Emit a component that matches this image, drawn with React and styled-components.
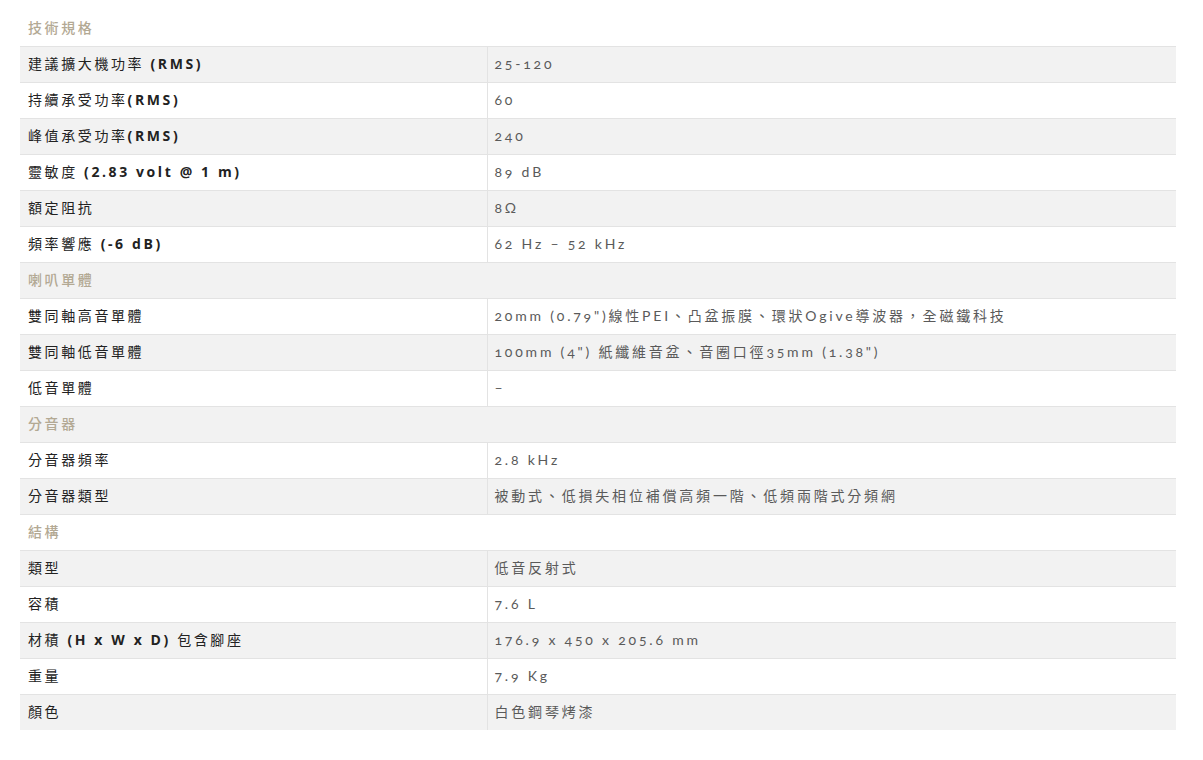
import React from 'react';
import styled, { createGlobalStyle } from 'styled-components';

const GlobalStyle = createGlobalStyle`
  body {
    margin: 0;
    background: #fff;
    font-family: "Open Sans", "Noto Sans CJK TC", sans-serif;
  }
`;

const specs = [
  { section: '技術規格' },
  ['建議擴大機功率 (RMS)', '25-120'],
  ['持續承受功率(RMS)', '60'],
  ['峰值承受功率(RMS)', '240'],
  ['靈敏度 (2.83 volt @ 1 m)', '89 dB'],
  ['額定阻抗', '8Ω'],
  ['頻率響應 (-6 dB)', '62 Hz – 52 kHz'],
  { section: '喇叭單體' },
  ['雙同軸高音單體', '20mm (0.79")線性PEI、凸盆振膜、環狀Ogive導波器，全磁鐵科技'],
  ['雙同軸低音單體', '100mm (4") 紙纖維音盆、音圈口徑35mm (1.38")'],
  ['低音單體', '–'],
  { section: '分音器' },
  ['分音器頻率', '2.8 kHz'],
  ['分音器類型', '被動式、低損失相位補償高頻一階、低頻兩階式分頻網'],
  { section: '結構' },
  ['類型', '低音反射式'],
  ['容積', '7.6 L'],
  ['材積 (H x W x D) 包含腳座', '176.9 x 450 x 205.6 mm'],
  ['重量', '7.9 Kg'],
  ['顏色', '白色鋼琴烤漆'],
];

const Page = styled.div`
  padding: 10px 27px 30px 20px;
`;

const Table = styled.table`
  width: 100%;
  border-collapse: collapse;
  table-layout: fixed;
`;

const LabelCol = styled.col`
  width: 467px;
`;

const Row = styled.tr`
  height: 36px;
  background: ${(p) => (p.$striped ? '#f2f2f2' : '#fff')};
  border-top: ${(p) => (p.$first ? 'none' : '1px solid #e3e3e3')};
`;

const SectionCell = styled.td`
  padding: 0 8px 2px;
  font-size: 14px;
  font-weight: 500;
  letter-spacing: 2.6px;
  color: #b3a994;
`;

const Label = styled.td`
  padding: 0 8px 2px;
  font-size: 14px;
  font-weight: 400;
  letter-spacing: 2.6px;
  color: #222;
  border-right: 1px solid #e3e3e3;
`;

const Latin = styled.span`
  font-weight: 700;
`;

const Value = styled.td`
  padding: 0 7px 2px;
  font-family: "Lato", "Noto Sans CJK TC", sans-serif;
  font-size: 14px;
  font-weight: 400;
  letter-spacing: 2.8px;
  color: #5a5a5a;
  font-feature-settings: "onum";
`;

// bold only the latin runs of a label, as the reference does
const renderLabel = (text) =>
  text.split(/([A-Za-z0-9().@\-\s]+)/).map((part, i) =>
    /[A-Za-z0-9]/.test(part) ? <Latin key={i}>{part}</Latin> : part
  );

export default function App() {
  return (
    <Page>
      <GlobalStyle />
      <Table>
        <colgroup>
          <LabelCol />
          <col />
        </colgroup>
        <tbody>
          {specs.map((item, i) =>
            item.section ? (
              <Row key={i} $striped={i % 2 === 1} $first={i === 0}>
                <SectionCell colSpan={2}>{item.section}</SectionCell>
              </Row>
            ) : (
              <Row key={i} $striped={i % 2 === 1}>
                <Label>{renderLabel(item[0])}</Label>
                <Value>{item[1]}</Value>
              </Row>
            )
          )}
        </tbody>
      </Table>
    </Page>
  );
}
